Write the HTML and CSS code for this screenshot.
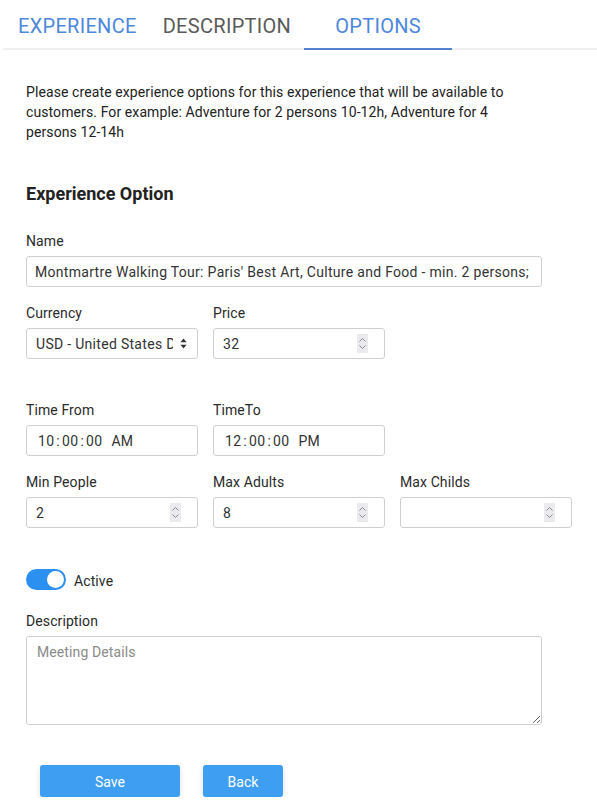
FILE: index.html
```html
<!DOCTYPE html>
<html lang="en">
<head>
<meta charset="utf-8">
<title>Experience Options</title>
<link rel="stylesheet" href="styles.css">
</head>
<body>
<nav class="tabs">
  <a class="tab tab-link">EXPERIENCE</a>
  <a class="tab">DESCRIPTION</a>
  <a class="tab tab-active">OPTIONS</a>
</nav>
<main class="content">
  <p class="intro">Please create experience options for this experience that will be available to customers. For example: Adventure for 2 persons 10-12h, Adventure for 4 persons 12-14h</p>
  <h2 class="section-title">Experience Option</h2>

  <div class="field field-name">
    <label class="label">Name</label>
    <input class="input input-wide" type="text" value="Montmartre Walking Tour: Paris' Best Art, Culture and Food - min. 2 persons; max 8">
  </div>

  <div class="row">
    <div class="field">
      <label class="label">Currency</label>
      <div class="input select">
        <span class="select-text">USD - United States Dollar</span>
        <svg class="select-arrow" width="7" height="11" viewBox="0 0 7 11"><path d="M3.5 0.5 L6.6 4.3 H0.4 Z M3.5 10.5 L6.6 6.7 H0.4 Z" fill="#333"/></svg>
      </div>
    </div>
    <div class="field">
      <label class="label">Price</label>
      <div class="spin-wrap">
        <input class="input" type="text" value="32">
        <span class="spinner"><svg width="11" height="19" viewBox="0 0 11 19"><path d="M2.5 7.5 L5.5 4.5 L8.5 7.5 M2.5 11.5 L5.5 14.5 L8.5 11.5" fill="none" stroke="#8a8a8a" stroke-width="1"/></svg></span>
      </div>
    </div>
  </div>

  <div class="row row-gap-lg">
    <div class="field">
      <label class="label">Time From</label>
      <div class="input time"><span>10</span><span class="colon">:</span><span>00</span><span class="colon">:</span><span>00</span><span class="ampm">AM</span></div>
    </div>
    <div class="field">
      <label class="label">TimeTo</label>
      <div class="input time"><span>12</span><span class="colon">:</span><span>00</span><span class="colon">:</span><span>00</span><span class="ampm">PM</span></div>
    </div>
  </div>

  <div class="row">
    <div class="field">
      <label class="label">Min People</label>
      <div class="spin-wrap">
        <input class="input" type="text" value="2">
        <span class="spinner"><svg width="11" height="19" viewBox="0 0 11 19"><path d="M2.5 7.5 L5.5 4.5 L8.5 7.5 M2.5 11.5 L5.5 14.5 L8.5 11.5" fill="none" stroke="#8a8a8a" stroke-width="1"/></svg></span>
      </div>
    </div>
    <div class="field">
      <label class="label">Max Adults</label>
      <div class="spin-wrap">
        <input class="input" type="text" value="8">
        <span class="spinner"><svg width="11" height="19" viewBox="0 0 11 19"><path d="M2.5 7.5 L5.5 4.5 L8.5 7.5 M2.5 11.5 L5.5 14.5 L8.5 11.5" fill="none" stroke="#8a8a8a" stroke-width="1"/></svg></span>
      </div>
    </div>
    <div class="field">
      <label class="label">Max Childs</label>
      <div class="spin-wrap">
        <input class="input" type="text" value="">
        <span class="spinner"><svg width="11" height="19" viewBox="0 0 11 19"><path d="M2.5 7.5 L5.5 4.5 L8.5 7.5 M2.5 11.5 L5.5 14.5 L8.5 11.5" fill="none" stroke="#8a8a8a" stroke-width="1"/></svg></span>
      </div>
    </div>
  </div>

  <div class="toggle-row">
    <span class="toggle"><span class="knob"></span></span>
    <span class="toggle-label">Active</span>
  </div>

  <div class="field field-desc">
    <label class="label">Description</label>
    <textarea class="input textarea" placeholder="Meeting Details"></textarea>
  </div>

  <div class="actions">
    <button class="btn btn-save">Save</button>
    <button class="btn btn-back">Back</button>
  </div>
</main>
</body>
</html>
```
FILE: styles.css
```css
* { box-sizing: border-box; }
html, body { margin: 0; padding: 0; background: #fff; }
body {
  font-family: Roboto, "Liberation Sans", Arial, sans-serif;
  font-size: 14px;
  letter-spacing: 0.1px;
  color: #222;
}
.tabs {
  display: flex;
  margin-left: 3px;
  border-bottom: 2px solid #f0f0f0;
  height: 50px;
}
.tab {
  display: block;
  height: 50px;
  padding: 4px 13px 0 13px;
  line-height: 44px;
  font-size: 20px;
  letter-spacing: 0.3px;
  color: #5a5a5a;
  text-decoration: none;
}
.tab:first-child { padding-left: 15px; }
.tab-link { color: #4d88dc; }
.tab-active {
  color: #4d88dc;
  width: 148px;
  text-align: center;
  border-bottom: 2px solid #4f82d0;
  padding-left: 0; padding-right: 0;
}
.content { padding: 0 26px; }
.intro {
  margin: 32px 0 0 0;
  line-height: 20px;
  width: 500px;
  color: #222;
}
.section-title {
  margin: 40px 0 0 0;
  font-size: 18px;
  line-height: 24px;
  font-weight: 700;
  letter-spacing: 0;
  color: #222;
}
.field { display: flex; flex-direction: column; }
.field-name { margin-top: 25px; }
.label {
  display: block;
  line-height: 20px;
  margin-bottom: 5px;
  color: #2a2a2a;
}
.input {
  height: 31px;
  width: 172px;
  border: 1px solid #cfcfcf;
  border-radius: 3px;
  padding: 0 9px;
  font-family: inherit;
  font-size: 14px;
  letter-spacing: 0.3px;
  color: #333;
  background: #fff;
  outline: none;
}
.input-wide { width: 516px; padding-left: 8px; padding-right: 8px; }
.row {
  display: grid;
  grid-template-columns: repeat(3, 172px);
  column-gap: 15px;
  margin-top: 16px;
}
.row-gap-lg { margin-top: 41px; }
.select {
  display: flex;
  align-items: center;
}
.select-text {
  flex: none;
  overflow: hidden;
  white-space: nowrap;
  width: 137px;
}
.select-arrow { flex: none; margin-left: 7px; }
.spin-wrap { position: relative; width: 172px; }
.spinner {
  position: absolute;
  right: 17px;
  top: 6px;
  width: 11px;
  height: 19px;
  background: #ebebef;
  display: block;
}
.spinner svg { display: block; }
.time {
  display: flex;
  align-items: center;
  padding-left: 11px;
}
.colon { margin: 0 2px; }
.ampm { margin-left: 9px; }
.toggle-row {
  display: flex;
  align-items: center;
  margin-top: 41px;
  height: 21px;
}
.toggle {
  position: relative;
  width: 40px;
  height: 21px;
  border-radius: 11px;
  background: #2b90ef;
  display: block;
}
.knob {
  position: absolute;
  right: 2px;
  top: 2px;
  width: 17px;
  height: 17px;
  border-radius: 50%;
  background: #fff;
}
.toggle-label { margin-left: 8px; color: #2a2a2a; line-height: 20px; padding-top: 2px; }
.field-desc { margin-top: 21px; }
.textarea {
  width: 516px;
  height: 89px;
  padding: 7px 10px;
  line-height: 16px;
  letter-spacing: 0.1px;
  resize: both;
}
.textarea::placeholder { color: #8a8a8a; }
.actions {
  display: flex;
  gap: 23px;
  margin: 40px 0 0 14px;
}
.btn {
  height: 32px;
  border: none;
  border-radius: 3px;
  background: #3d9ef2;
  color: #fff;
  font-family: inherit;
  font-size: 14px;
  box-shadow: 0 2px 6px rgba(0,0,0,0.12);
  padding: 1px 0 0 0;
}
.btn-save { width: 140px; }
.btn-back { width: 80px; }
```
